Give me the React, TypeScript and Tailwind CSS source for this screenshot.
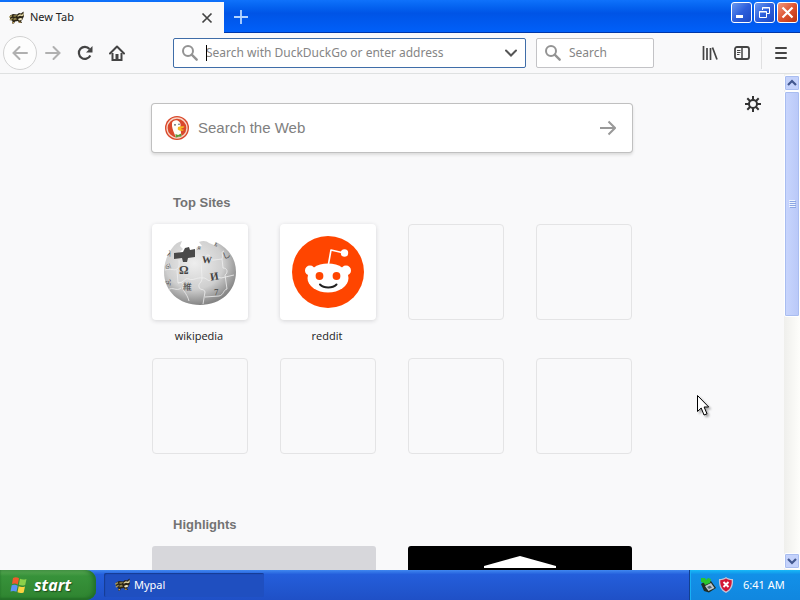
import { useState } from "react"
import type { ReactNode } from "react"
import clsx from "clsx"

type TopSite = {
    name: string
    icon: ReactNode
}

const RaccoonIcon = () => (
    <svg className="h-4 w-4 shrink-0" viewBox="0 0 16 16" aria-hidden="true">
        <path d="M1 5.500 4 4l4 .5L10 3l2 .5L14.500 1.500 15 6l-1.500 3.500L12 11l1 2h-3l-1-2-3 .5L5 13.500H3L3.500 11 1 9.500z" fill="#2b2415" />
        <path d="M0 6.500 2.500 5l.8 1.200L.5 8zM.5 9.300l3-1.500.3 1.300L1 10.800z" fill="#a5975c" />
        <path d="M4.500 5.300 8.500 5 6.500 6.800H4.500zM4.500 8.200 7 7.800l1 1.600-3.500.8z" fill="#8f8148" />
        <path d="m8.500 5.800 2.300-1.600 2.200.6 1.500-2 .2 2.400-1.700 1.100-2-.6-2.300 1z" fill="#e6dba6" />
        <path d="m9 9 2.200-1 2.300.4-1 1.500-2.500.7z" fill="#f0e7c4" />
        <path d="M3.500 12h1.500v1.200H3.500zM9.800 11.800h2v1h-2z" fill="#c8a45a" />
    </svg>
)

const SearchIcon = () => (
    <svg className="h-5 w-5 shrink-0" viewBox="0 0 20 20" fill="none" stroke="#939393" aria-hidden="true">
        <circle cx="8" cy="8" r="5" strokeWidth="2" />
        <path d="m11.700 11.700 5 5" strokeWidth="2.400" strokeLinecap="round" />
    </svg>
)

const DuckIcon = () => (
    <svg className="h-6 w-6 shrink-0" viewBox="0 0 24 24" aria-hidden="true">
        <circle cx="12" cy="12" r="12" fill="#d9482b" />
        <circle cx="12" cy="12" r="10" fill="none" stroke="#f7d5c6" strokeWidth="1.300" />
        <path d="M7 7c1-3 5-3.600 7-1.500 2 1.600 1.600 4 1.400 6l1 8.800-5.400 1.200C9 17 7.400 13 7 10z" fill="#fffdf6" />
        <path d="M13 11c2-.8 5-1 6.500-.2-.6 1.300-2.500 1.500-4 2 1.600.8 3 .6 3.400 1.200-1.500 1.600-5 .8-6.200-.8z" fill="#f5b921" />
        <path d="m10.500 18 2.600 1 3-1.600.4 3.200-3 .2-2.800 1z" fill="#5c9a39" />
        <circle cx="10" cy="8.800" r=".9" fill="#4b5a6b" />
        <circle cx="14" cy="8.300" r=".8" fill="#4b5a6b" />
    </svg>
)

const globeGlyphs = [
    { char: "Ω", x: 17, y: 38, size: 12, turn: 0 },
    { char: "W", x: 40, y: 27, size: 10, turn: 4 },
    { char: "И", x: 48, y: 44, size: 11, turn: -10 },
    { char: "維", x: 21, y: 54, size: 9, turn: 3 },
    { char: "7", x: 52, y: 59, size: 9, turn: -4 },
    { char: "し", x: 60, y: 22, size: 8, turn: -20 },
    { char: "ふ", x: 4, y: 49, size: 7, turn: 35 },
    { char: "ত", x: 4, y: 35, size: 7, turn: 70 },
    { char: "λ", x: 6, y: 21, size: 8, turn: 20 },
    { char: "я", x: 36, y: 14, size: 7, turn: 10 },
    { char: "ъ", x: 53, y: 12, size: 7, turn: 35 },
]

const WikipediaGlobe = () => (
    <svg className="h-[72px] w-[76px]" viewBox="0 0 76 72" aria-hidden="true">
        <defs>
            <radialGradient id="globe" cx="42%" cy="35%" r="65%">
                <stop offset="0" stopColor="#eeeeee" />
                <stop offset=".62" stopColor="#cfcfcf" />
                <stop offset="1" stopColor="#858585" />
            </radialGradient>
        </defs>
        <path d="M11 11c2-3 5-5 9-6l-2 5 3 3-4 4h8l3-2 4 2 3-6 5-1-3-4c4-2 8-1 10 1l5 2 2-3c12 6 20 16 20 30 0 19-15 33-36 33S2 55 2 36c0-10 4-19 9-25z" fill="url(#globe)" />
        <path d="m12 17 9-1 2-4 4-1 1 3 5-1v8l-7 1-1 4h-4l-1-4-8 1z" fill="#494949" />
        <g fill="none" stroke="#efefef" strokeWidth=".8">
            <path d="M3 34c6-2 9 1 12-1s2-7 2-9M15 34l1 13c4-2 7 2 5 4s4 6 6 14" />
            <path d="M16 47c6 0 7-6 11-4s8-2 13-1l-1-17c5-1 3-6 7-6s1 6 6 5l8-1" />
            <path d="M40 42c0 5-4 5-3 9s5 1 6 5l-2 12M40 42c5-1 5 4 9 2s5-4 10-2l13-3" />
            <path d="M60 23c2-4-2-7 2-8M60 23l1 9c5 0 5 5 2 7l2 14c-4 1-3 6-8 7l-14 1M6 54c5-4 8 2 13-2" />
        </g>
        <g fill="#444" fontFamily='"Liberation Serif", "Noto Sans CJK JP", serif'>
            {globeGlyphs.map((g) => (
                <text
                    key={g.char}
                    x={g.x}
                    y={g.y}
                    fontSize={g.size}
                    fontWeight={g.size > 9 ? 700 : 400}
                    transform={`rotate(${g.turn} ${g.x + 4} ${g.y - 4})`}
                >
                    {g.char}
                </text>
            ))}
        </g>
    </svg>
)

const RedditLogo = () => (
    <svg className="h-[72px] w-[72px]" viewBox="0 0 72 72" aria-hidden="true">
        <circle cx="36" cy="36" r="36" fill="#ff4500" />
        <path d="m36.500 28 2.500-14L52 17" fill="none" stroke="#fff" strokeWidth="1.600" strokeLinejoin="round" />
        <circle cx="52.500" cy="17" r="3.700" fill="#fff" />
        <circle cx="18" cy="34.500" r="5" fill="#fff" />
        <circle cx="54" cy="34.500" r="5" fill="#fff" />
        <ellipse cx="36" cy="42" rx="20.500" ry="14.500" fill="#fff" />
        <circle cx="27.500" cy="40" r="3.900" fill="#ff4500" />
        <circle cx="44.500" cy="40" r="3.900" fill="#ff4500" />
        <path d="M28 48.500c4 4 12.500 4 16.500 0" fill="none" stroke="#222" strokeWidth="2" strokeLinecap="round" />
    </svg>
)

const topSites: (TopSite | null)[] = [
    { name: "wikipedia", icon: <WikipediaGlobe /> },
    { name: "reddit", icon: <RedditLogo /> },
    null,
    null,
    null,
    null,
    null,
    null,
]

const TitleBar = () => (
    <header className="flex h-[33px] shrink-0 bg-linear-to-b from-[#0f72fb] via-[#0054e6] via-40% to-[#0060fa] shadow-[inset_0_-1px_0_#0036a8]">
        <div className="mt-[2px] flex w-56 items-center bg-[#f9f9fa] pr-[7px] pl-[9px] text-[11px] text-[#222]">
            <RaccoonIcon />
            <span className="ml-[5px] flex-1">New Tab</span>
            <button aria-label="Close tab" className="flex h-5 w-5 items-center justify-center">
                <svg className="h-3 w-3" viewBox="0 0 12 12" stroke="#444" strokeWidth="1.700">
                    <path d="m1.500 1.500 9 9M10.500 1.500l-9 9" />
                </svg>
            </button>
        </div>
        <button aria-label="New tab" className="flex w-[34px] items-center justify-center">
            <svg className="h-4 w-4" viewBox="0 0 16 16" stroke="#b4d4ff" strokeWidth="1.800">
                <path d="M8 1v14M1 8h14" />
            </svg>
        </button>
        <div className="flex-1" />
        <div className="flex gap-[2px] pt-[2px] pr-[2px]">
            <button aria-label="Minimize" className="h-[21px] w-[21px] rounded-[3px] border border-white bg-linear-to-br from-[#6a98f0] via-[#2e5fdc] to-[#1c49c4]">
                <svg className="h-full w-full" viewBox="0 0 19 19">
                    <path d="M4 12h7v3H4z" fill="#fff" />
                </svg>
            </button>
            <button aria-label="Restore" className="h-[21px] w-[21px] rounded-[3px] border border-white bg-linear-to-br from-[#6a98f0] via-[#2e5fdc] to-[#1c49c4]">
                <svg className="h-full w-full" viewBox="0 0 19 19" fill="none" stroke="#fff">
                    <path d="M7.500 7V4.500h7v6H12M7 5h8M4.500 8.500h7v6h-7zM4 9h8" />
                </svg>
            </button>
            <button aria-label="Close" className="h-[21px] w-[21px] rounded-[3px] border border-white bg-linear-to-br from-[#f0977e] via-[#dd5330] to-[#b9330f]">
                <svg className="h-full w-full" viewBox="0 0 19 19" stroke="#fff" strokeWidth="2.200">
                    <path d="m4.500 4.500 10 10M14.500 4.500l-10 10" />
                </svg>
            </button>
        </div>
    </header>
)

const ToolBar = () => {
    const [address, setAddress] = useState("")
    const [query, setQuery] = useState("")

    return (
        <nav className="flex h-[41px] shrink-0 items-center border-b border-[#dfe1e1] bg-[#f9f9fa] text-[12px]">
            <button aria-label="Back" className="ml-[3px] flex h-[34px] w-[34px] items-center justify-center rounded-full border border-[#d2d2d2] bg-[#fdfdfd]">
                <svg className="h-4 w-4" viewBox="0 0 16 16" fill="none" stroke="#b0b0b0" strokeWidth="2" strokeLinecap="round">
                    <path d="M15 8H1.500M7.500 2l-6 6 6 6" />
                </svg>
            </button>
            <button aria-label="Forward" className="flex h-8 w-8 items-center justify-center">
                <svg className="h-4 w-4" viewBox="0 0 16 16" fill="none" stroke="#b0b0b0" strokeWidth="2" strokeLinecap="round">
                    <path d="M1 8h13.500M8.500 2l6 6-6 6" />
                </svg>
            </button>
            <button aria-label="Reload" className="flex h-8 w-8 items-center justify-center">
                <svg className="h-4 w-4" viewBox="0 0 16 16" fill="none" stroke="#444" strokeWidth="2.200">
                    <path d="M13.300 10.500A6 6 0 1 1 12.500 4" />
                    <path d="M15.500 1v6.500H9z" fill="#444" stroke="none" />
                </svg>
            </button>
            <button aria-label="Home" className="flex h-8 w-8 items-center justify-center">
                <svg className="h-4 w-4" viewBox="0 0 16 16" fill="none" stroke="#444" strokeWidth="2">
                    <path d="m1 8.500 7-7 7 7" strokeLinecap="round" strokeLinejoin="round" />
                    <path d="M3.500 8v7h9V8" />
                    <path d="M6.500 9h3v6h-3z" fill="#444" stroke="none" />
                </svg>
            </button>
            <div className="relative ml-10 flex h-[30px] flex-1 items-center rounded-[2px] border border-[#3f6da8] bg-white pr-1 pl-[6px]">
                <SearchIcon />
                <input
                    aria-label="Address"
                    className="ml-[6px] min-w-0 flex-1 outline-none placeholder:text-[#858585]"
                    placeholder="Search with DuckDuckGo or enter address"
                    value={address}
                    onChange={(e) => setAddress(e.target.value)}
                />
                {!address && <span className="absolute left-8 h-4 w-px bg-black" />}
                <button aria-label="Show history" className="flex h-5 w-5 items-center justify-center">
                    <svg className="h-3 w-3" viewBox="0 0 12 12" fill="none" stroke="#555" strokeWidth="2" strokeLinecap="round">
                        <path d="m1 3.500 5 5 5-5" />
                    </svg>
                </button>
            </div>
            <div className="ml-[10px] flex h-[30px] w-[118px] items-center rounded-[2px] border border-[#c3c3c6] bg-white pl-[6px]">
                <SearchIcon />
                <input
                    aria-label="Search"
                    className="ml-[6px] w-full min-w-0 outline-none placeholder:text-[#858585]"
                    placeholder="Search"
                    value={query}
                    onChange={(e) => setQuery(e.target.value)}
                />
            </div>
            <div className="ml-10 flex">
                <button aria-label="Library" className="flex h-8 w-8 items-center justify-center">
                    <svg className="h-4 w-4" viewBox="0 0 16 16" fill="none" stroke="#444" strokeWidth="1.700">
                        <path d="M1.500 1v14M5 3v12M8.500 3v12M10.500 2.500 15 14.500" />
                    </svg>
                </button>
                <button aria-label="Sidebars" className="flex h-8 w-8 items-center justify-center">
                    <svg className="h-4 w-4" viewBox="0 0 16 16" fill="none" stroke="#444">
                        <rect x="1" y="2" width="14" height="12" rx="2" strokeWidth="1.800" />
                        <path d="M8 2v12" strokeWidth="1.500" />
                        <path d="M3 5.500h3.500M3 7.500h3.500M3 9.500h2.500" />
                    </svg>
                </button>
            </div>
            <div className="ml-[3px] h-8 w-px bg-[#e0e0e1]" />
            <button aria-label="Menu" className="flex h-8 w-[38px] items-center justify-center">
                <svg className="h-4 w-4" viewBox="0 0 16 16" stroke="#444" strokeWidth="2" strokeLinecap="round">
                    <path d="M3 3h10M3 8h10M3 13h10" />
                </svg>
            </button>
        </nav>
    )
}

const SiteTile = ({ site }: { site: TopSite | null }) => (
    <li>
        {site ? (
            <a href="#" className="block">
                <span className="flex h-24 items-center justify-center rounded-[4px] bg-white shadow-[0_1px_4px_#d4d4d6]">
                    {site.icon}
                </span>
                <span className="block pt-2 pr-[2px] text-center font-['Open_Sans',Tahoma,sans-serif] text-[11px] leading-4 text-[#222]">{site.name}</span>
            </a>
        ) : (
            <div className="h-24 rounded-[4px] border border-[#e4e4e5]" />
        )}
    </li>
)

const ScrollBar = () => (
    <div className="flex w-4 shrink-0 flex-col bg-linear-to-r from-[#efefec] to-[#fefefb] py-px">
        {["up", "thumb", "down"].map((part) => (
            <div
                key={part}
                className={clsx(
                    "flex items-center justify-center rounded-[2px] border border-white shadow-[inset_0_0_0_1px_#a9bdf0]",
                    part === "thumb" ? "h-[226px] bg-linear-to-r from-[#c9d6fd] to-[#b9c8f8]" : "h-4 bg-[#c4d2fb]",
                    part === "down" && "mt-auto"
                )}
            >
                {part === "thumb" ? (
                    <svg className="h-2 w-2" viewBox="0 0 8 8" strokeWidth="1">
                        <path d="M1 .5h6M1 2.500h6M1 4.500h6M1 6.500h6" stroke="#eef4fe" />
                        <path d="M2 1.500h6M2 3.500h6M2 5.500h6M2 7.500h6" stroke="#8ca5e4" />
                    </svg>
                ) : (
                    <svg className={clsx("h-2 w-[10px]", part === "down" && "rotate-180")} viewBox="0 0 10 8" fill="none" stroke="#42588f" strokeWidth="2.200">
                        <path d="m1 6 4-4 4 4" />
                    </svg>
                )}
            </div>
        ))}
    </div>
)

const NewTabPage = () => {
    const [search, setSearch] = useState("")

    return (
        <main className="relative min-w-0 flex-1 overflow-hidden font-['Liberation_Sans',Arial,sans-serif]">
            <button aria-label="Customize" className="absolute top-[22px] right-[23px]">
                <svg className="h-4 w-4" viewBox="0 0 16 16" fill="none" stroke="#333">
                    <circle cx="8" cy="8" r="4" strokeWidth="2" />
                    <path d="M8 0v4M8 12v4M0 8h4M12 8h4M2.300 2.300l2.900 2.900M10.800 10.800l2.900 2.900M2.300 13.700l2.900-2.900M10.800 5.200l2.900-2.900" strokeWidth="2" />
                </svg>
            </button>
            <div className="mx-auto w-[480px] pt-[30px]">
                <div className="flex h-12 items-center rounded-[3px] bg-white pr-4 pl-[13px] shadow-[0_0_0_1px_#c0c0c0,0_2px_3px_1px_#dcdcdc]">
                    <DuckIcon />
                    <input
                        aria-label="Search the Web"
                        className="ml-[9px] flex-1 pt-px text-[15px] outline-none placeholder:text-[#808080]"
                        placeholder="Search the Web"
                        value={search}
                        onChange={(e) => setSearch(e.target.value)}
                    />
                    <button aria-label="Submit search">
                        <svg className="h-4 w-4" viewBox="0 0 16 16" fill="none" stroke="#999" strokeWidth="2">
                            <path d="M0 8h15M8.500 1.500 15 8l-6.500 6.500" />
                        </svg>
                    </button>
                </div>

                <section className="pt-[41px]">
                    <h2 className="pl-[21px] text-[13px] leading-5 font-bold text-[#737373]">Top Sites</h2>
                    <ul className="mt-[11px] grid auto-rows-[96px] grid-cols-4 gap-x-8 gap-y-[38px]">
                        {topSites.map((site, i) => (
                            <SiteTile key={i} site={site} />
                        ))}
                    </ul>
                </section>

                <section className="pt-[61px]">
                    <h2 className="pl-[21px] text-[13px] leading-5 font-bold text-[#737373]">Highlights</h2>
                    <div className="mt-[11px] grid grid-cols-2 gap-8">
                        <div className="h-36 rounded-[3px] bg-[#d7d7db]" />
                        <div className="h-36 rounded-[3px] bg-black pt-[10px]">
                            <svg className="mx-auto h-[14px] w-[72px]" viewBox="0 0 72 14">
                                <path d="M36 0 72 10v2H0v-2z" fill="#fff" />
                            </svg>
                        </div>
                    </div>
                </section>
            </div>
        </main>
    )
}

const TaskBar = () => (
    <footer className="flex h-[30px] shrink-0 bg-linear-to-b from-[#4087f0] via-[#245edb] via-15% to-[#1f50c6] text-[11px] text-white">
        <button className="flex w-24 items-center rounded-r-[10px] bg-linear-to-b from-[#5eac58] via-[#37923a] via-20% to-[#2f8430] pl-[10px] shadow-[inset_-3px_0_4px_#22702a,inset_0_-2px_2px_#256f27]">
            <svg className="h-[18px] w-[18px] shrink-0" viewBox="0 0 18 18" aria-hidden="true">
                <path d="M3 2c2-1 4-1 6 .3L7.800 8.500C6 7.300 4 7.200 2 8z" fill="#ef5a2d" />
                <path d="M10 2.800c2 1 4 1.100 6.500.2L15.200 9c-2 .9-4.300.8-6.300-.2z" fill="#8bd04a" />
                <path d="M1.700 9.300c2-.9 4-.7 6 .4L6.500 15.800c-2-1.100-4-1.200-6-.4z" fill="#5b93f5" />
                <path d="M8.700 10.200c2 1 4 1.100 6.300.2l-1.300 6c-2 .9-4.200.8-6.200-.2z" fill="#fbd341" />
            </svg>
            <span className="ml-[6px] font-['Open_Sans',sans-serif] text-[16px] leading-5 font-bold italic [text-shadow:1px_1px_1px_#1d4f1d]">start</span>
        </button>
        <button className="my-[3px] ml-2 flex w-40 items-center rounded-[2px] bg-[#1f4fc0] pl-[11px] shadow-[inset_1px_1px_1px_#163b92]">
            <RaccoonIcon />
            <span className="ml-[3px]">Mypal</span>
        </button>
        <div className="ml-auto flex w-[111px] items-center border-l border-[#12408f] bg-linear-to-b from-[#19b9f7] via-[#1290e8] via-15% to-[#1187df] pl-[10px] shadow-[inset_1px_0_0_#18b0f5]">
            <svg className="h-4 w-4" viewBox="0 0 16 16" aria-hidden="true">
                <path d="m1 7 3-2 7-1 5 7-7 4.500-5-1.500z" fill="#202d25" />
                <path d="m5 9 6-3 3.500 5-6 3z" fill="#bec7cc" />
                <path d="m7 10 3-1.500 2 2-3 1.500z" fill="#54646f" />
                <path d="M1 1h4l1 2 2-2 3 1-1 4-5 2-1-2-3-1z" fill="#28c62d" />
            </svg>
            <svg className="ml-[2px] h-4 w-4" viewBox="0 0 16 16" aria-hidden="true">
                <path d="M8 0c2 1.500 4 2 7 2 .5 6-1 11-7 14C2 13 .5 8 1 2c3 0 5-.5 7-2z" fill="#c3c5d8" />
                <path d="M8 1.500c2 1.200 3.500 1.600 5.700 1.700C14 8 12.500 12 8 14.500 3.500 12 2 8 2.300 3.200 4.500 3.100 6 2.700 8 1.500z" fill="#d31735" />
                <path d="m5.500 5 5 5M10.500 5l-5 5" stroke="#fff" strokeWidth="1.900" />
            </svg>
            <time className="ml-[9px]">6:41 AM</time>
        </div>
    </footer>
)

const App = () => {
    return (
        <div className="relative flex h-screen flex-col overflow-hidden bg-[#f9f9fa] font-['Noto_Sans',Tahoma,sans-serif]">
            <TitleBar />
            <ToolBar />
            <div className="flex min-h-0 flex-1">
                <NewTabPage />
                <ScrollBar />
            </div>
            <TaskBar />

            {/* mouse pointer */}
            <svg className="pointer-events-none absolute top-[395px] left-[697px] h-6 w-4 drop-shadow-[2px_2px_1px_#00000055]" viewBox="0 0 16 24" aria-hidden="true">
                <path d="M.5.500v16l3.700-3.500 2.800 7 3-1.200-2.900-6.800h4.600z" fill="#fff" stroke="#000" />
            </svg>
        </div>
    )
}

export default App
